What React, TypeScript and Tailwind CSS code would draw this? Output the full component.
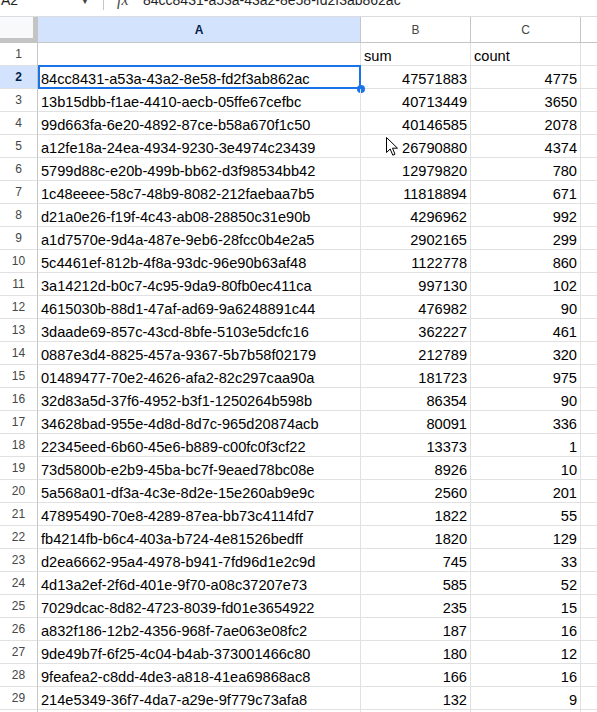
import React from 'react';

const ROWS: [string, string, string][] = [
  ['', 'sum', 'count'],
  ['84cc8431-a53a-43a2-8e58-fd2f3ab862ac', '47571883', '4775'],
  ['13b15dbb-f1ae-4410-aecb-05ffe67cefbc', '40713449', '3650'],
  ['99d663fa-6e20-4892-87ce-b58a670f1c50', '40146585', '2078'],
  ['a12fe18a-24ea-4934-9230-3e4974c23439', '26790880', '4374'],
  ['5799d88c-e20b-499b-bb62-d3f98534bb42', '12979820', '780'],
  ['1c48eeee-58c7-48b9-8082-212faebaa7b5', '11818894', '671'],
  ['d21a0e26-f19f-4c43-ab08-28850c31e90b', '4296962', '992'],
  ['a1d7570e-9d4a-487e-9eb6-28fcc0b4e2a5', '2902165', '299'],
  ['5c4461ef-812b-4f8a-93dc-96e90b63af48', '1122778', '860'],
  ['3a14212d-b0c7-4c95-9da9-80fb0ec411ca', '997130', '102'],
  ['4615030b-88d1-47af-ad69-9a6248891c44', '476982', '90'],
  ['3daade69-857c-43cd-8bfe-5103e5dcfc16', '362227', '461'],
  ['0887e3d4-8825-457a-9367-5b7b58f02179', '212789', '320'],
  ['01489477-70e2-4626-afa2-82c297caa90a', '181723', '975'],
  ['32d83a5d-37f6-4952-b3f1-1250264b598b', '86354', '90'],
  ['34628bad-955e-4d8d-8d7c-965d20874acb', '80091', '336'],
  ['22345eed-6b60-45e6-b889-c00fc0f3cf22', '13373', '1'],
  ['73d5800b-e2b9-45ba-bc7f-9eaed78bc08e', '8926', '10'],
  ['5a568a01-df3a-4c3e-8d2e-15e260ab9e9c', '2560', '201'],
  ['47895490-70e8-4289-87ea-bb73c4114fd7', '1822', '55'],
  ['fb4214fb-b6c4-403a-b724-4e81526bedff', '1820', '129'],
  ['d2ea6662-95a4-4978-b941-7fd96d1e2c9d', '745', '33'],
  ['4d13a2ef-2f6d-401e-9f70-a08c37207e73', '585', '52'],
  ['7029dcac-8d82-4723-8039-fd01e3654922', '235', '15'],
  ['a832f186-12b2-4356-968f-7ae063e08fc2', '187', '16'],
  ['9de49b7f-6f25-4c04-b4ab-373001466c80', '180', '12'],
  ['9feafea2-c8dd-4de3-a818-41ea69868ac8', '166', '16'],
  ['214e5349-36f7-4da7-a29e-9f779c73afa8', '132', '9'],
  ['', '', ''],
];

function FormulaBar() {
  return (
    <div className="h-[17px] overflow-hidden border-b border-[#dadce0]">
      <div className="-mt-[15px] h-[30px] flex items-center text-[14px] text-[#1f1f1f]">
        <span className="w-[80px] pl-[1px]">A2</span>
        <span className="w-[20px] text-[10px] text-[#444746]">▼</span>
        <div className="w-px h-[20px] bg-[#c4c7c5] ml-[3px]" />
        <span className="ml-[13px] w-[26px] italic font-['Liberation_Serif',serif] text-[16px] text-[#444746]">fx</span>
        <span className="whitespace-nowrap">84cc8431-a53a-43a2-8e58-fd2f3ab862ac</span>
      </div>
    </div>
  );
}

function Cursor() {
  return (
    <svg className="absolute left-[386px] top-[137px]" width="13" height="20" viewBox="0 0 13 20">
      <path
        d="M0.5 0.5 L0.5 15.5 L4.2 12 L6.8 18.2 L9 17.2 L6.5 11.2 L11.5 11.2 Z"
        fill="#fff"
        stroke="#000"
        strokeWidth="1"
        strokeLinejoin="miter"
      />
    </svg>
  );
}

export default function App() {
  return (
    <div className="relative w-[597px] h-[712px] overflow-hidden bg-white font-['Liberation_Sans',Arial,sans-serif] text-black">
      <FormulaBar />
      <div className="grid grid-cols-[38px_323px_110px_110px_1fr]">
        {/* column headers */}
        <div className="h-[26px] bg-[#f8f9fa] border-r-[5px] border-b-[5px] border-[#c4c4c4]" />
        <div className="h-[26px] flex items-center justify-center bg-[#d3e3fd] border-r border-b border-[#c4c7c5] text-[12px] font-bold text-[#041e49]">
          A
        </div>
        <div className="h-[26px] flex items-center justify-center border-r border-b border-[#c4c7c5] text-[12px] text-[#444746]">
          B
        </div>
        <div className="h-[26px] flex items-center justify-center border-r border-b border-[#c4c7c5] text-[12px] text-[#444746]">
          C
        </div>
        <div className="h-[26px] border-b border-[#c4c7c5]" />

        {ROWS.map((row, i) => {
          const n = i + 1;
          const selected = n === 2;
          const isHeader = n === 1;
          return (
            <React.Fragment key={n}>
              <div
                className={
                  'h-[23px] flex items-center justify-center border-r border-r-[#c4c7c5] border-b border-b-[#e1e1e1] text-[12px] ' +
                  (selected ? 'bg-[#d3e3fd] font-bold text-[#041e49]' : 'text-[#444746]')
                }
              >
                {n}
              </div>
              <div className="relative h-[23px] flex items-end pl-[3px] border-r border-b border-[#e1e1e1] text-[14.6px] leading-[17px] whitespace-nowrap">
                {row[0]}
                {selected && (
                  <>
                    <div className="absolute -top-px left-0 -right-px -bottom-px border-2 border-[#1a73e8]" />
                    <div className="absolute -right-[5px] -bottom-[5px] w-[8px] h-[8px] rounded-full bg-[#1a73e8]" />
                  </>
                )}
              </div>
              <div
                className={
                  'h-[23px] flex items-end border-r border-b border-[#e1e1e1] text-[14.6px] leading-[17px] whitespace-nowrap ' +
                  (isHeader ? 'pl-[3px]' : 'justify-end pr-[3px]')
                }
              >
                {row[1]}
              </div>
              <div
                className={
                  'h-[23px] flex items-end border-r border-b border-[#e1e1e1] text-[14.6px] leading-[17px] whitespace-nowrap ' +
                  (isHeader ? 'pl-[3px]' : 'justify-end pr-[3px]')
                }
              >
                {row[2]}
              </div>
              <div className="h-[23px] border-b border-[#e1e1e1]" />
            </React.Fragment>
          );
        })}
      </div>
      <Cursor />
    </div>
  );
}
